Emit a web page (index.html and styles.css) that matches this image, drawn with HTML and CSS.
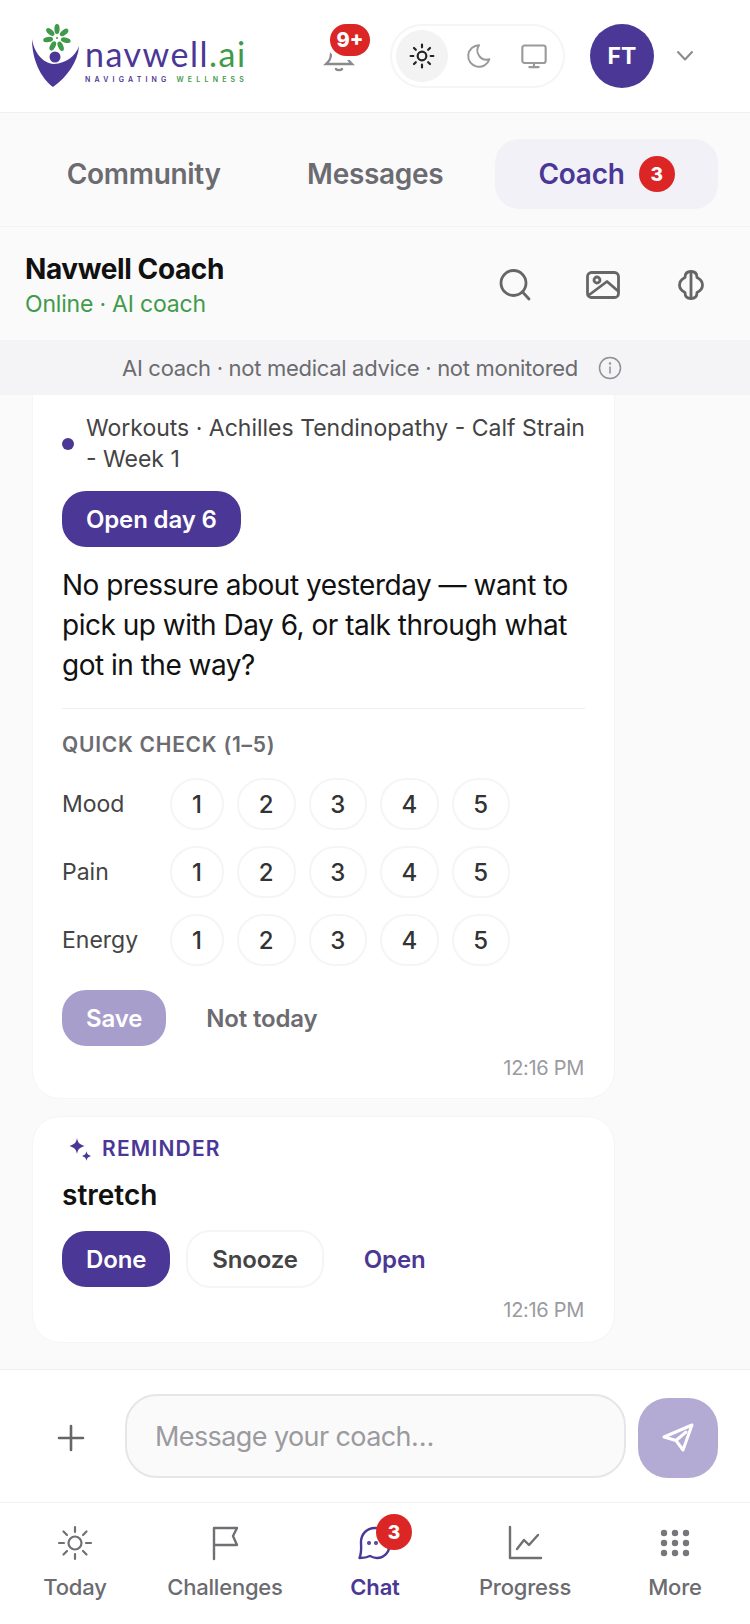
FILE: index.html
```html
<!DOCTYPE html>
<html lang="en">
<head>
    <meta charset="UTF-8">
    <meta name="viewport" content="width=device-width, initial-scale=1.0">
    <title>Navwell Coach</title>
    <link rel="stylesheet" href="styles.css">
</head>
<body>
<div class="app">

    <header class="topbar">
        <div class="logo">
            <svg class="logo-mark" viewBox="0 0 48 64" width="48" height="64">
                <g fill="#3f9a4a">
                    <ellipse cx="25" cy="5" rx="2.6" ry="5"/>
                    <ellipse cx="25" cy="5" rx="2.6" ry="5" transform="rotate(52 25 14)"/>
                    <ellipse cx="25" cy="5" rx="2.6" ry="5" transform="rotate(104 25 14)"/>
                    <ellipse cx="25" cy="5" rx="2.6" ry="5" transform="rotate(156 25 14)"/>
                    <ellipse cx="25" cy="5" rx="2.6" ry="5" transform="rotate(208 25 14)"/>
                    <ellipse cx="25" cy="5" rx="2.6" ry="5" transform="rotate(260 25 14)"/>
                    <ellipse cx="25" cy="5" rx="2.6" ry="5" transform="rotate(312 25 14)"/>
                    <circle cx="25" cy="14" r="1"/>
                </g>
                <circle cx="23" cy="33" r="5.5" fill="#4b3795"/>
                <path d="M0 15C2 28 10 39 22 40C34 39 43 33 47 22C46 38 35 53 21 63C9 54 0 36 0 15Z" fill="#4b3795"/>
            </svg>
            <div class="logo-text">
                <div class="logo-name">navwell<span class="logo-ai">.ai</span></div>
                <div class="logo-tag">NAVIGATING <span class="logo-ai">WELLNESS</span></div>
            </div>
        </div>
        <div class="bell">
            <svg viewBox="0 0 32 32" width="32" height="32" fill="none" stroke="#8a8a8e" stroke-width="2.4" stroke-linecap="round"><path d="M8 14C8 19 6 21 3 24H29C26 21 24 19 24 14C24 9 20 6 16 6C12 6 8 9 8 14Z"/><path d="M13 29C14 30.5 18 30.5 19 29"/></svg>
            <span class="badge badge-bell">9+</span>
        </div>
        <div class="theme-switch">
            <span class="theme-btn theme-btn-on">
                <svg viewBox="0 0 24 24" width="26" height="26" fill="none" stroke="#222" stroke-width="2" stroke-linecap="round"><circle cx="12" cy="12" r="4"/><path d="M12 1.5V4M12 20V22.5M1.5 12H4M20 12H22.5M4.6 4.6L6.3 6.3M17.7 17.7L19.4 19.4M4.6 19.4L6.3 17.7M17.7 6.3L19.4 4.6"/></svg>
            </span>
            <span class="theme-btn">
                <svg viewBox="0 0 24 24" width="26" height="26" fill="none" stroke="#9a9a9a" stroke-width="1.8" stroke-linecap="round" stroke-linejoin="round"><path d="M13 2A10 10 0 1 0 22.5 15A8.5 8.5 0 0 1 13 2Z"/></svg>
            </span>
            <span class="theme-btn">
                <svg viewBox="0 0 24 24" width="28" height="28" fill="none" stroke="#9a9a9a" stroke-width="1.8" stroke-linecap="round" stroke-linejoin="round"><rect x="2" y="3" width="20" height="15" rx="2"/><path d="M12 18V21M8 21.5H16"/></svg>
            </span>
        </div>
        <div class="avatar">FT</div>
        <svg class="caret" viewBox="0 0 18 12" width="18" height="12" fill="none" stroke="#8a8a8e" stroke-width="2" stroke-linecap="round" stroke-linejoin="round"><path d="M2 2L9 9.5L16 2"/></svg>
    </header>

    <nav class="tabs">
        <div class="tab">Community</div>
        <div class="tab">Messages</div>
        <div class="tab tab-on">Coach <span class="badge badge-tab">3</span></div>
    </nav>

    <section class="chat-head">
        <div class="chat-title">
            <div class="chat-name">Navwell Coach</div>
            <div class="chat-status">Online · AI coach</div>
        </div>
        <div class="chat-icons">
            <svg viewBox="0 0 32 32" width="32" height="32" fill="none" stroke="#666" stroke-width="2.8" stroke-linecap="round"><circle cx="14.5" cy="14" r="12.5"/><path d="M24 23.5L30 30"/></svg>
            <svg viewBox="0 0 34 28" width="34" height="28" fill="none" stroke="#666" stroke-width="2.8" stroke-linecap="round" stroke-linejoin="round"><rect x="1.5" y="1.5" width="31" height="25" rx="4"/><circle cx="11" cy="9" r="3"/><path d="M3 24L21 10.5L32 20"/></svg>
            <svg class="icon-brain" viewBox="0 0 26 30" width="26" height="30" fill="none" stroke="#666" stroke-width="2.8" stroke-linecap="round" stroke-linejoin="round"><path d="M13 1.5C17 1.5 19 4 19 7.5C22 9 24.5 12 24.5 15C24.5 18 22 21 19 22.5C19 26 17 28.5 13 28.5C9 28.5 7 26 7 22.5C4 21 1.5 18 1.5 15C1.5 12 4 9 7 7.5C7 4 9 1.5 13 1.5Z"/><path d="M13 1.5V28.5"/></svg>
        </div>
    </section>

    <div class="notice">
        <span>AI coach · not medical advice · not monitored</span>
        <svg viewBox="0 0 24 24" width="24" height="24" fill="none" stroke="#8f8f94" stroke-width="1.5" stroke-linecap="round"><circle cx="12" cy="12" r="10.5"/><path d="M12 11V17"/><circle cx="12" cy="7.5" r="0.5"/></svg>
    </div>

    <main class="messages">
        <article class="card">
            <div class="context">
                <span class="context-dot"></span>
                <span>Workouts · Achilles Tendinopathy - Calf Strain - Week 1</span>
            </div>
            <button class="btn btn-primary btn-open">Open day 6</button>
            <p class="card-text">No pressure about yesterday — want to pick up with Day 6, or talk through what got in the way?</p>
            <div class="check">
                <div class="check-title">QUICK CHECK (1–5)</div>
                <div class="check-row">
                    <span class="check-label">Mood</span>
                    <span class="score score-one">1</span><span class="score">2</span><span class="score">3</span><span class="score">4</span><span class="score">5</span>
                </div>
                <div class="check-row">
                    <span class="check-label">Pain</span>
                    <span class="score score-one">1</span><span class="score">2</span><span class="score">3</span><span class="score">4</span><span class="score">5</span>
                </div>
                <div class="check-row">
                    <span class="check-label">Energy</span>
                    <span class="score score-one">1</span><span class="score">2</span><span class="score">3</span><span class="score">4</span><span class="score">5</span>
                </div>
            </div>
            <div class="actions">
                <button class="btn btn-primary btn-faded">Save</button>
                <button class="btn btn-plain">Not today</button>
            </div>
            <div class="time">12:16 PM</div>
        </article>

        <article class="card card-reminder">
            <div class="reminder-label">
                <svg viewBox="0 0 24 24" width="24" height="24" fill="#4b3795"><path d="M9 1C9.8 5.5 11 7 16.5 9C11 11 9.8 12.5 9 17C8.2 12.5 7 11 1.5 9C7 7 8.2 5.5 9 1Z"/><path d="M18.5 14C19 17 19.8 17.7 23 19C19.8 20.3 19 21 18.5 24C18 21 17.2 20.3 14 19C17.2 17.7 18 17 18.5 14Z"/></svg>
                <span>REMINDER</span>
            </div>
            <div class="reminder-title">stretch</div>
            <div class="actions actions-reminder">
                <button class="btn btn-primary">Done</button>
                <button class="btn btn-outline">Snooze</button>
                <button class="btn btn-link">Open</button>
            </div>
            <div class="time">12:16 PM</div>
        </article>
    </main>

    <div class="composer">
        <svg class="composer-plus" viewBox="0 0 28 28" width="28" height="28" fill="none" stroke="#666" stroke-width="2.6" stroke-linecap="round"><path d="M14 2V26M2 14H26"/></svg>
        <div class="composer-input">Message your coach…</div>
        <div class="composer-send">
            <svg viewBox="0 0 32 30" width="32" height="30" fill="none" stroke="#fff" stroke-width="3" stroke-linejoin="round" stroke-linecap="round"><path d="M30 2L2 14L14 17.5L21 27L30 2Z"/><path d="M14 17.5L24 9"/></svg>
        </div>
    </div>

    <footer class="bottom-nav">
        <div class="nav-item">
            <svg viewBox="0 0 36 36" width="36" height="36" fill="none" stroke="#707074" stroke-width="2.2" stroke-linecap="round"><circle cx="18" cy="18" r="6.5"/><path d="M18 2V7M18 29V34M2 18H7M29 18H34M6.5 6.5L10 10M26 26L29.5 29.5M6.5 29.5L10 26M26 10L29.5 6.5"/></svg>
            <span>Today</span>
        </div>
        <div class="nav-item">
            <svg viewBox="0 0 36 36" width="36" height="36" fill="none" stroke="#707074" stroke-width="2.4" stroke-linecap="round" stroke-linejoin="round"><path d="M7 34V3H30L26 11L30 20H7"/></svg>
            <span>Challenges</span>
        </div>
        <div class="nav-item nav-item-on">
            <div class="nav-icon">
                <svg viewBox="0 0 36 36" width="36" height="36" fill="none" stroke="#4b3795" stroke-width="2.4" stroke-linecap="round" stroke-linejoin="round"><path d="M18 3C9 3 4 10 4 17C4 22 5 27 2.5 33C8 33 11 32 13 31C15 32 17 33 20 33C28 33 33 26 33 18C33 10 27 3 18 3Z"/><circle cx="12" cy="18" r="0.8"/><circle cx="19" cy="18" r="0.8"/></svg>
                <span class="badge badge-nav">3</span>
            </div>
            <span>Chat</span>
        </div>
        <div class="nav-item">
            <svg viewBox="0 0 36 36" width="36" height="36" fill="none" stroke="#707074" stroke-width="2.4" stroke-linecap="round" stroke-linejoin="round"><path d="M3 2V33H34"/><path d="M10 24L17 15L22 20L31 10"/></svg>
            <span>Progress</span>
        </div>
        <div class="nav-item">
            <svg viewBox="0 0 30 30" width="30" height="30" fill="#77777b" class="nav-more"><circle cx="4" cy="5" r="3.2"/><circle cx="15" cy="5" r="3.2"/><circle cx="26" cy="5" r="3.2"/><circle cx="4" cy="15" r="3.2"/><circle cx="15" cy="15" r="3.2"/><circle cx="26" cy="15" r="3.2"/><circle cx="4" cy="25" r="3.2"/><circle cx="15" cy="25" r="3.2"/><circle cx="26" cy="25" r="3.2"/></svg>
            <span>More</span>
        </div>
    </footer>

</div>
</body>
</html>
```

FILE: styles.css
```css
* {
    box-sizing: border-box;
}
body {
    margin: 0;
    background-color: #fff;
    font-family: Inter, "Noto Sans", sans-serif;
    color: #111;
}
button {
    font-family: inherit;
    border: none;
    cursor: pointer;
}
.app {
    width: 750px;
    height: 1624px;
    display: flex;
    flex-direction: column;
    overflow: hidden;
}

/* top bar */
.topbar {
    height: 113px;
    flex: none;
    display: flex;
    align-items: center;
    padding: 0 0 0 32px;
    background-color: #fff;
    border-bottom: 1px solid #f0f0f1;
}
.logo {
    display: flex;
    align-items: flex-start;
    width: 290px;
}
.logo-mark {
    flex: none;
}
.logo-text {
    margin-left: 5px;
    padding-top: 9px;
}
.logo-name {
    font-family: Lato, sans-serif;
    font-size: 34px;
    line-height: 42px;
    color: #4b3795;
    letter-spacing: 1.5px;
}
.logo-ai {
    color: #3f9a4a;
}
.logo-tag {
    font-size: 7px;
    font-weight: 600;
    line-height: 10px;
    letter-spacing: 4.2px;
    color: #4b3795;
    white-space: nowrap;
}
.bell {
    position: relative;
    width: 32px;
    height: 32px;
    margin-left: 1px;
}
.badge {
    position: absolute;
    display: flex;
    align-items: center;
    justify-content: center;
    color: #fff;
    font-weight: 800;
    background-color: #dc2626;
    border-radius: 20px;
}
.badge-bell {
    top: -16px;
    left: 7px;
    width: 40px;
    height: 32px;
    font-size: 20px;
    box-shadow: 0 0 0 4px #fff;
}
.theme-switch {
    display: flex;
    align-items: center;
    margin-left: 35px;
    width: 175px;
    height: 64px;
    padding: 4px;
    gap: 4px;
    border: 2px solid #f5f5f6;
    border-radius: 32px;
}
.theme-btn {
    width: 52px;
    height: 52px;
    flex: none;
    display: flex;
    align-items: center;
    justify-content: center;
    border-radius: 50%;
}
.theme-btn-on {
    background-color: #f3f3f4;
}
.avatar {
    width: 64px;
    height: 64px;
    margin-left: 25px;
    flex: none;
    display: flex;
    align-items: center;
    justify-content: center;
    border-radius: 50%;
    background-color: #4b3795;
    color: #fff;
    font-size: 23px;
    font-weight: 700;
}
.caret {
    margin-left: 22px;
}

/* tabs */
.tabs {
    height: 114px;
    flex: none;
    display: flex;
    align-items: center;
    padding: 9px 32px 0;
    gap: 8px;
    background-color: #fafafb;
    border-bottom: 1px solid #f3f3f4;
}
.tab {
    flex: 1;
    height: 70px;
    display: flex;
    align-items: center;
    justify-content: center;
    gap: 14px;
    font-size: 28px;
    font-weight: 600;
    letter-spacing: -0.3px;
    color: #6b6b70;
    border-radius: 24px;
}
.tab-on {
    flex: none;
    width: 223px;
    color: #4b3795;
    background-color: #f2f1f8;
}
.badge-tab {
    position: static;
    width: 36px;
    height: 36px;
    font-size: 19px;
}

/* chat header */
.chat-head {
    height: 113px;
    flex: none;
    display: flex;
    align-items: center;
    justify-content: space-between;
    padding: 4px 46px 0 25px;
    background-color: #fafafb;
}
.chat-name {
    font-size: 28px;
    font-weight: 700;
    line-height: 36px;
    letter-spacing: -0.4px;
    color: #111;
}
.chat-status {
    font-size: 23px;
    line-height: 34px;
    letter-spacing: -0.2px;
    color: #3f9a4a;
}
.chat-icons {
    display: flex;
    align-items: center;
    gap: 55px;
    padding-bottom: 2px;
}
.icon-brain {
    margin-left: 3px;
}

/* banner */
.notice {
    height: 55px;
    flex: none;
    display: flex;
    align-items: center;
    justify-content: center;
    gap: 20px;
    padding-right: 6px;
    font-size: 22px;
    letter-spacing: -0.3px;
    color: #6b6b70;
    background-color: #f4f4f6;
}

/* messages */
.messages {
    flex: 1;
    min-height: 0;
    display: flex;
    flex-direction: column;
    justify-content: flex-end;
    gap: 17px;
    padding: 0 32px 26px;
    overflow: hidden;
    background-color: #fafafa;
}
.card {
    flex: none;
    width: 583px;
    padding: 30px 29px 16px 29px;
    background-color: #fff;
    border: 1px solid #f5f5f6;
    border-radius: 0 0 28px 28px;
}
.card-reminder {
    padding-top: 17px;
    padding-bottom: 18px;
    border-radius: 28px;
}
.context {
    display: flex;
    align-items: center;
    gap: 12px;
    font-size: 23px;
    line-height: 31px;
    color: #444;
}
.context-dot {
    flex: none;
    width: 12px;
    height: 12px;
    border-radius: 50%;
    background-color: #4b3795;
}
.btn {
    height: 56px;
    padding: 0 24px;
    font-size: 24px;
    font-weight: 600;
    letter-spacing: -0.15px;
    border-radius: 24px;
}
.btn-primary {
    color: #fff;
    background-color: #4b3795;
}
.btn-open {
    display: block;
    margin-top: 16px;
}
.btn-faded {
    background-color: #a89ecb;
}
.btn-plain {
    color: #6b6b70;
    background: none;
}
.btn-outline {
    color: #444;
    background-color: #fff;
    border: 2px solid #f5f5f6;
    height: 58px;
    padding: 0 24px;
}
.btn-link {
    color: #4b3795;
    background: none;
}
.card-text {
    margin: 18px 0 0;
    font-size: 28px;
    line-height: 40px;
    letter-spacing: -0.5px;
    color: #111;
}
.check {
    margin-top: 23px;
    padding-top: 22px;
    border-top: 1px solid #efeff0;
}
.check-title {
    font-size: 21px;
    font-weight: 600;
    line-height: 28px;
    letter-spacing: 0.75px;
    color: #6b6b70;
    margin-bottom: 19px;
}
.check-row {
    display: flex;
    align-items: center;
    gap: 13px;
    margin-bottom: 16px;
}
.check-label {
    width: 96px;
    margin-right: -1px;
    font-size: 23px;
    color: #444;
}
.score {
    width: 58.5px;
    height: 52px;
    display: flex;
    align-items: center;
    justify-content: center;
    font-size: 24px;
    font-weight: 550;
    color: #333;
    border: 2px solid #f5f5f6;
    border-radius: 26px;
}
.score-one {
    width: 54px;
}
.actions {
    display: flex;
    align-items: center;
    gap: 16px;
    margin-top: 24px;
}
.actions-reminder {
    margin-top: 17px;
    margin-bottom: 2px;
}
.time {
    margin-top: 8px;
    padding-right: 1px;
    text-align: right;
    font-size: 20px;
    line-height: 28px;
    letter-spacing: -0.3px;
    color: #9a9a9f;
}
.reminder-label {
    display: flex;
    align-items: center;
    gap: 10px;
    font-size: 21px;
    font-weight: 600;
    line-height: 30px;
    letter-spacing: 1.2px;
    color: #4b3795;
    padding-left: 6px;
}
.reminder-title {
    margin-top: 13px;
    font-size: 28px;
    font-weight: 600;
    line-height: 36px;
    color: #111;
}

/* composer */
.composer {
    height: 134px;
    flex: none;
    display: flex;
    align-items: center;
    padding: 0 32px 0 57px;
    background-color: #fff;
    border-top: 1px solid #f0f0f1;
    border-bottom: 1px solid #f0f0f1;
}
.composer-plus {
    flex: none;
    margin-top: 3px;
}
.composer-input {
    width: 502px;
    height: 84px;
    margin-left: 40px;
    padding-left: 28px;
    display: flex;
    align-items: center;
    font-size: 27px;
    letter-spacing: -0.6px;
    color: #9a9a9f;
    background-color: #fafafa;
    border: 2px solid #e6e6e8;
    border-radius: 32px;
}
.composer-send {
    width: 80px;
    height: 80px;
    margin-left: 12px;
    margin-top: 3px;
    flex: none;
    display: flex;
    align-items: center;
    justify-content: center;
    background-color: #b3abd4;
    border-radius: 30px;
}

/* bottom nav */
.bottom-nav {
    height: 121px;
    flex: none;
    display: flex;
    background-color: #fff;
    padding-top: 22px;
}
.nav-item {
    flex: 1;
    display: flex;
    flex-direction: column;
    align-items: center;
    gap: 13px;
    font-size: 22px;
    font-weight: 500;
    letter-spacing: -0.2px;
    color: #6b6b70;
}
.nav-item-on {
    color: #4b3795;
    font-weight: 600;
}
.nav-icon {
    position: relative;
    width: 36px;
    height: 36px;
}
.nav-more {
    margin: 3px 0;
}
.badge-nav {
    top: -11px;
    left: 19px;
    width: 36px;
    height: 36px;
    font-size: 19px;
}
```
